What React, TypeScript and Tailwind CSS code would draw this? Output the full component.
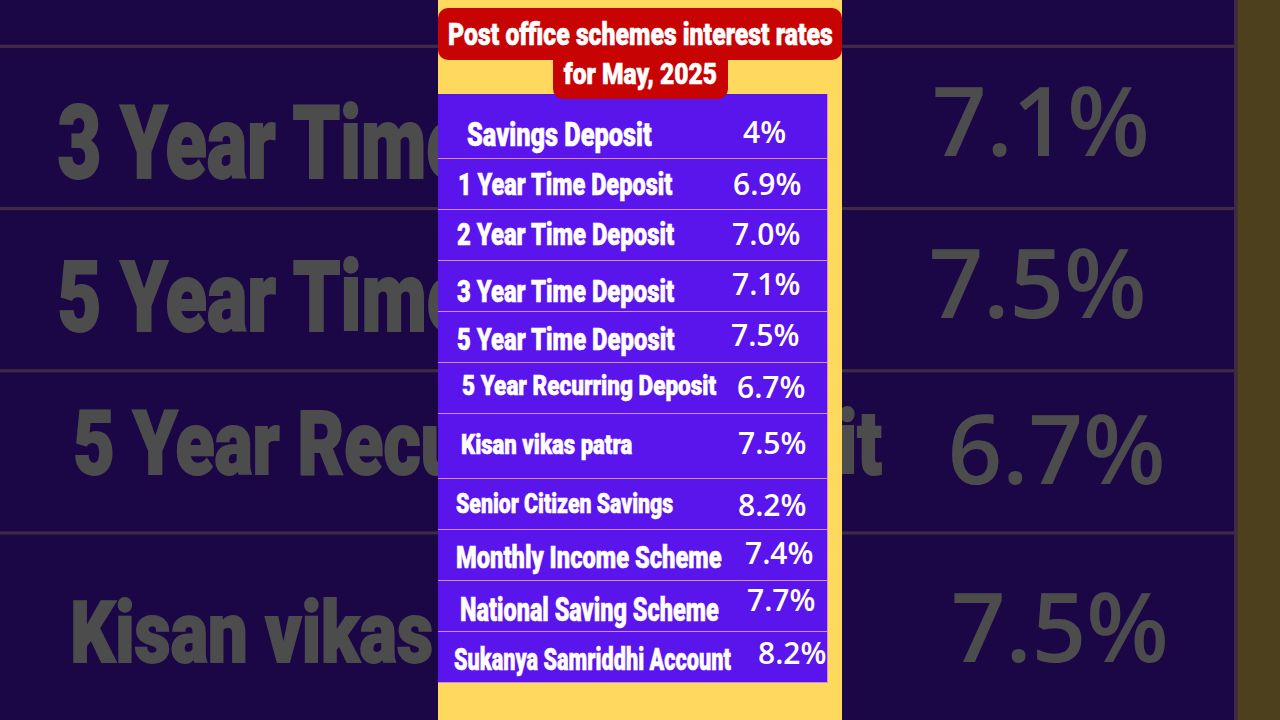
const rows = [
  { label: "Savings Deposit", value: "4%", h: "h-[65px]", lx: "pl-[29px]", ly: "translate-y-[8px]", ls: "text-[34px] scale-x-[0.745]", vx: "ml-[12px]", vy: "translate-y-[7px]" },
  { label: "1 Year Time Deposit", value: "6.9%", h: "h-[51px]", lx: "pl-[20px]", ly: "translate-y-[0px]", ls: "text-[32px] scale-x-[0.735]", vx: "ml-[2px]", vy: "translate-y-[1px]" },
  { label: "2 Year Time Deposit", value: "7.0%", h: "h-[51px]", lx: "pl-[19px]", ly: "-translate-y-[1px]", ls: "text-[32px] scale-x-[0.745]", vx: "ml-[1px]", vy: "translate-y-[0px]" },
  { label: "3 Year Time Deposit", value: "7.1%", h: "h-[51px]", lx: "pl-[19px]", ly: "translate-y-[5px]", ls: "text-[32px] scale-x-[0.745]", vx: "ml-[1px]", vy: "-translate-y-[1px]" },
  { label: "5 Year Time Deposit", value: "7.5%", h: "h-[51px]", lx: "pl-[19px]", ly: "translate-y-[3px]", ls: "text-[31px] scale-x-[0.77]", vx: "ml-[0px]", vy: "-translate-y-[1px]" },
  { label: "5 Year Recurring Deposit", value: "6.7%", h: "h-[51px]", lx: "pl-[24px]", ly: "-translate-y-[2px]", ls: "text-[28px] scale-x-[0.805]", vx: "ml-[6px]", vy: "translate-y-[0px]" },
  { label: "Kisan vikas patra", value: "7.5%", h: "h-[65px]", lx: "pl-[23px]", ly: "translate-y-[0px]", ls: "text-[27px] scale-x-[0.82]", vx: "ml-[7px]", vy: "-translate-y-[2px]" },
  { label: "Senior Citizen Savings", value: "8.2%", h: "h-[51px]", lx: "pl-[18px]", ly: "translate-y-[0px]", ls: "text-[28px] scale-x-[0.76]", vx: "ml-[7px]", vy: "translate-y-[2px]" },
  { label: "Monthly Income Scheme", value: "7.4%", h: "h-[51px]", lx: "pl-[18px]", ly: "translate-y-[2px]", ls: "text-[32px] scale-x-[0.74]", vx: "ml-[14px]", vy: "-translate-y-[1px]" },
  { label: "National Saving Scheme", value: "7.7%", h: "h-[51px]", lx: "pl-[22px]", ly: "translate-y-[3px]", ls: "text-[34px] scale-x-[0.69]", vx: "ml-[16px]", vy: "-translate-y-[5px]" },
  { label: "Sukanya Samriddhi Account", value: "8.2%", h: "h-[51px]", lx: "pl-[16px]", ly: "translate-y-[3px]", ls: "text-[31px] scale-x-[0.7]", vx: "ml-[27px]", vy: "-translate-y-[3px]" },
];

function RatesCard() {
  return (
    <div className="flex h-[720px] w-[404px] shrink-0 flex-col bg-[#ffd95e]">
      {/* Title */}
      <div className="relative z-10 flex flex-col font-['Roboto',sans-serif] font-black text-white [-webkit-text-stroke:0.6px_white]">
        <div className="mt-[8px] flex h-[52px] items-center justify-center rounded-[10px] bg-[#c70303]">
          <span className="inline-block whitespace-nowrap text-[31px] leading-none scale-x-[0.8]">
            Post office schemes interest rates
          </span>
        </div>
        <div className="-mt-[8px] flex h-[47px] w-[175px] items-center justify-center self-center rounded-b-[10px] bg-[#c70303]">
          <span className="inline-block -translate-y-[2px] whitespace-nowrap text-[30px] leading-none scale-x-[0.82]">
            for May, 2025
          </span>
        </div>
      </div>

      {/* Rates table */}
      <div className="-mt-[5px] w-[390px] border-r border-[#d58be6] bg-[#5a14ec]">
        {rows.map((r) => (
          <div
            key={r.label}
            className={`grid grid-cols-[293px_1fr] items-center border-b border-[#d58be6] text-white ${r.h}`}
          >
            <div className={`whitespace-nowrap ${r.lx}`}>
              <span
                className={`inline-block origin-left font-['Roboto',sans-serif] font-black leading-none [-webkit-text-stroke:0.6px_white] ${r.ls} ${r.ly}`}
              >
                {r.label}
              </span>
            </div>
            <div className={`whitespace-nowrap ${r.vx}`}>
              <span
                className={`inline-block font-['Open_Sans',sans-serif] text-[30px] font-semibold leading-none ${r.vy}`}
              >
                {r.value}
              </span>
            </div>
          </div>
        ))}
      </div>
    </div>
  );
}

export default function App() {
  return (
    <div className="relative h-[720px] w-[1280px] overflow-hidden bg-[#1d064a]">
      {/* Zoomed, dimmed copy behind the card */}
      <div aria-hidden className="absolute left-[-3px] top-[-782px] origin-top-left scale-[3.18]">
        <RatesCard />
      </div>
      <div className="absolute inset-0 bg-black/70" />

      <div className="relative flex h-full justify-center">
        <RatesCard />
      </div>
    </div>
  );
}
